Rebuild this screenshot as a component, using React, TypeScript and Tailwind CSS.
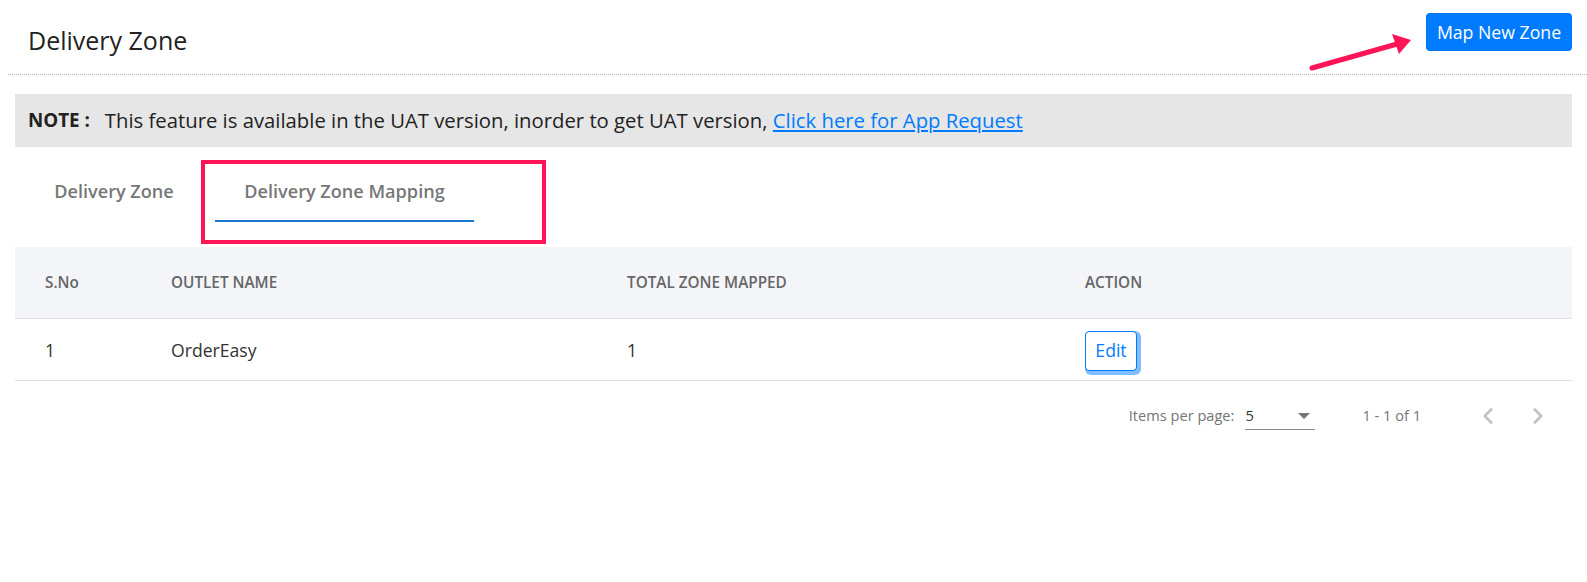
import { ChevronLeft, ChevronRight } from 'lucide-react'

const columns = ['S.No', 'OUTLET NAME', 'TOTAL ZONE MAPPED', 'ACTION']

const rows = [{ id: 1, outlet: 'OrderEasy', zones: 1 }]

function Arrow() {
  return (
    <svg
      className="pointer-events-none absolute left-[1300px] top-[28px]"
      width="120"
      height="50"
      viewBox="0 0 120 50"
    >
      <line x1="12" y1="40" x2="97" y2="16" stroke="#ff1457" strokeWidth="5" strokeLinecap="round" />
      <polygon points="92,6 111,12 99,26" fill="#ff1457" />
    </svg>
  )
}

export default function App() {
  return (
    <div className="relative min-h-[582px] w-full bg-white font-['Open_Sans',sans-serif] text-[#212529]">
      <div className="ml-[8px] flex h-[75px] items-start justify-between border-b border-dotted border-[#b5b5b5]">
        <h1 className="pl-[20px] pt-[24px] text-[25px] leading-[32px] font-normal text-[#222]">Delivery Zone</h1>
        <button
          type="button"
          className="mr-[15px] mt-[13px] h-[38px] w-[146px] rounded-[4px] bg-[#007bff] text-[17.7px] text-white"
        >
          Map New Zone
        </button>
      </div>
      <Arrow />

      <div className="mx-[15px] mt-[19px] flex h-[53px] items-center bg-[#e6e6e6] pl-[13px] text-[20.3px]">
        <span className="text-[18.8px] font-bold text-[#222]">NOTE :</span>
        <span className="ml-[15px] text-[#222]">
          This feature is available in the UAT version, inorder to get UAT version,{' '}
          <a href="#" className="text-[#007bff] underline">
            Click here for App Request
          </a>
        </span>
      </div>

      <div className="ml-[26px] mt-[17px] flex h-[58px] items-stretch text-[18.1px] font-semibold text-[#777]">
        <div className="flex w-[176px] items-center justify-center pb-[2px]">Delivery Zone</div>
        <div className="ml-[13px] flex w-[259px] items-center justify-center border-b-2 border-[#1976d2]">
          Delivery Zone Mapping
        </div>
      </div>
      <div className="pointer-events-none absolute left-[201px] top-[160px] h-[84px] w-[345px] border-4 border-[#ff1457]" />

      <div className="mx-[15px] mt-[25px]">
        <div className="grid h-[72px] grid-cols-[156px_456px_458px_1fr] items-center border-b border-[#e0e0e0] bg-[#f4f5f9] text-[15.3px] font-semibold text-[#666]">
          {columns.map((c, i) => (
            <div key={c} className={i === 0 ? 'pl-[30px]' : ''}>
              {c}
            </div>
          ))}
        </div>
        {rows.map((r) => (
          <div
            key={r.id}
            className="grid h-[62px] grid-cols-[156px_456px_458px_1fr] items-center border-b border-[#e0e0e0] pt-[2px] text-[17.6px] text-[#333]"
          >
            <div className="pl-[30px]">{r.id}</div>
            <div>{r.outlet}</div>
            <div>{r.zones}</div>
            <div>
              <button
                type="button"
                className="h-[40px] w-[52px] rounded-[4px] border border-[#007bff] bg-white text-[17.6px] text-[#007bff] shadow-[2px_2px_0_2px_#80bdff]"
              >
                Edit
              </button>
            </div>
          </div>
        ))}

        <div className="flex h-[70px] items-center justify-end text-[14.6px] text-[#757575]">
          <span>Items per page:</span>
          <div className="ml-[11px] flex h-[28px] w-[70px] items-center justify-between border-b border-[#8a8a8a] text-[#333]">
            <span>5</span>
            <span className="mr-[5px] h-0 w-0 border-x-[6px] border-t-[6px] border-x-transparent border-t-[#757575]" />
          </div>
          <span className="ml-[47px]">1 - 1 of 1</span>
          <div className="ml-[45px] flex items-center">
            <span className="flex h-[44px] w-[44px] items-center justify-center text-[#c2c2c2]">
              <ChevronLeft size={26} strokeWidth={2.5} />
            </span>
            <span className="ml-[6px] mr-[12px] flex h-[44px] w-[44px] items-center justify-center text-[#c2c2c2]">
              <ChevronRight size={26} strokeWidth={2.5} />
            </span>
          </div>
        </div>
      </div>
    </div>
  )
}
